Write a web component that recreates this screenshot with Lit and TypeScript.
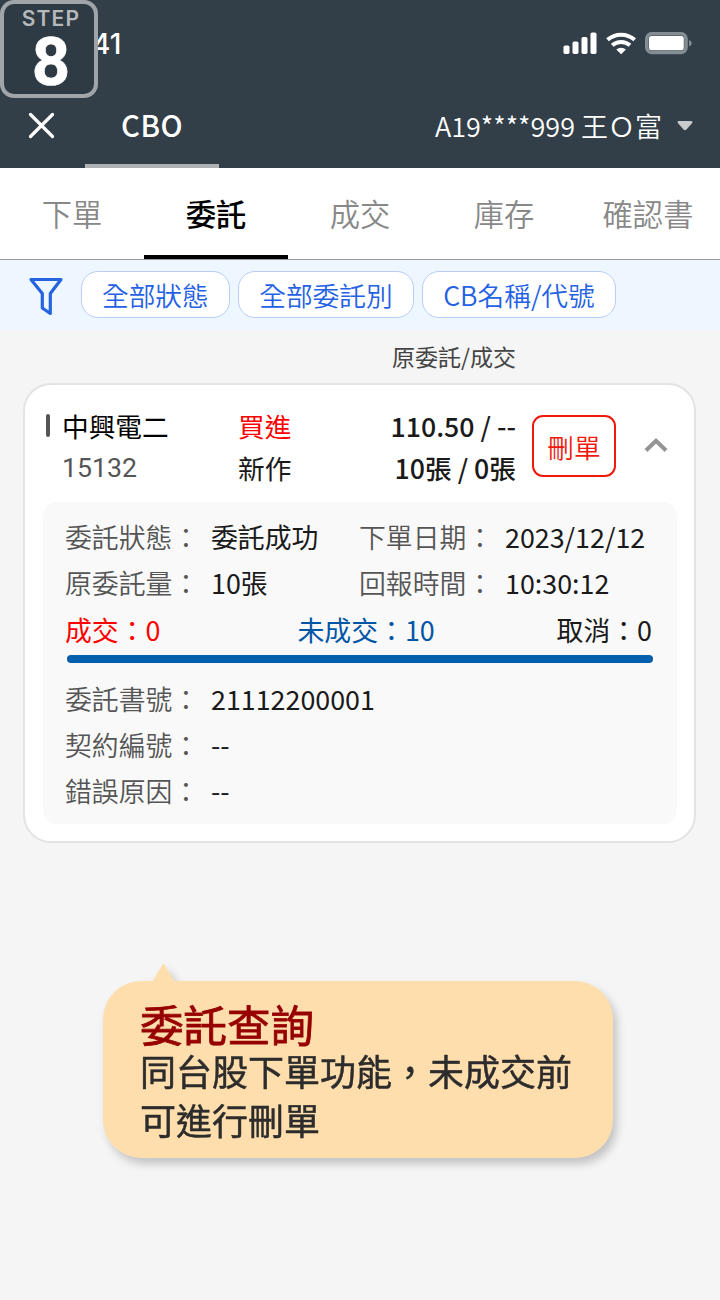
import { LitElement, html, css } from "lit";
import { customElement, state } from "lit/decorators.js";
import { classMap } from "lit/directives/class-map.js";

@customElement("status-bar")
class StatusBar extends LitElement {
  static styles = css`
    :host { display: flex; height: 84px; box-sizing: border-box; align-items: center; padding: 4px 27px 0 92px; justify-content: space-between; color: #fff; }
    .time { font: 500 28px/30px Inter, sans-serif; }
    svg { display: block; }
  `;
  render() {
    return html`
      <span class="time">41</span>
      <svg width="130" height="24" viewBox="0 0 130 24" fill="#fff">
        <rect x="0.5" y="13.500" width="6" height="8.5" rx="1.7" />
        <rect x="9.5" y="9.500" width="6" height="12.5" rx="1.7" />
        <rect x="18.5" y="5" width="6" height="17" rx="1.7" />
        <rect x="27.5" y="0.5" width="6" height="21.5" rx="1.7" />
        <g fill="none" stroke="#fff" stroke-width="4">
          <path d="M44.500 7.800a20.500 20.500 0 0 1 27.200 0" />
          <path d="M49.200 13.300a13.500 13.500 0 0 1 17.800 0" />
        </g>
        <path d="M53.300 17.500a7.200 7.200 0 0 1 9.600 0L58.100 22.300z" />
        <rect x="83.800" y="1.700" width="39.200" height="18.800" rx="5" fill="none" stroke="#858d94" stroke-width="3.600" />
        <rect x="86" y="3.900" width="34.800" height="14.400" rx="2.500" />
        <path d="M126 8v6.500q2.700-1 2.700-3.200t-2.700-3.300z" fill="#858d94" />
      </svg>
    `;
  }
}

@customElement("step-badge")
class StepBadge extends LitElement {
  static styles = css`
    :host { position: absolute; left: 0; top: 0; width: 98px; height: 98px; box-sizing: border-box; border: 4px solid #a0a5aa; border-radius: 14px; background: #2e3a44; display: flex; flex-direction: column; align-items: center; padding: 4px 0 0 4px; }
    .label { font: 600 21px/22px Inter, sans-serif; letter-spacing: 1.200px; color: #b5b9bc; }
    .num { font: 700 67px/67px Roboto, sans-serif; color: #fff; -webkit-text-stroke: 0.600px #fff; margin: -1px 0 0 0; }
  `;
  render() {
    return html`<span class="label">STEP</span><span class="num">8</span>`;
  }
}

@customElement("order-card")
class OrderCard extends LitElement {
  static styles = css`
    :host { display: block; margin: 0 24px 0 23px; height: 460px; box-sizing: border-box; border: 2px solid #e3e3e3; border-radius: 28px; background: #fff; }
    .head { display: grid; grid-template-columns: 193px 121px 157px 84px 1fr; padding: 20px 0 0 20px; height: 117px; box-sizing: border-box; }
    .col { display: flex; flex-direction: column; line-height: 42px; color: #1a1a1a; }
    .name { display: flex; align-items: center; gap: 12px; color: #000; }
    .mark { width: 4px; height: 23px; border-radius: 2px; background: #555; margin: -2px 0 0 1px; }
    .code { padding-left: 17px; font-family: Roboto, sans-serif; color: #555; }
    .buy { color: #f00; }
    .right { align-items: flex-end; font-weight: 500; }
    .cancel { margin: 10px 0 0 16px; width: 84px; height: 62px; box-sizing: border-box; border: 2px solid #f01a0c; border-radius: 11px; color: #f01a0c; background: #fff; font: inherit; font-weight: 350; padding: 0; line-height: 59px; }
    .fold { margin: 30px 0 0 44px; display: block; }
    .panel { margin: 0 17px 0 18px; height: 322px; box-sizing: border-box; border-radius: 14px; background: #f9f9f9; padding: 12px 25px 0 22px; color: #1a1a1a; }
    .row { display: grid; grid-template-columns: 146px 148px 146px 1fr; height: 46px; line-height: 46px; white-space: nowrap; font-size: 26.850px; }
    .label { color: #555; font-weight: 350; }
    .sum { display: grid; grid-template-columns: 232.500px 1fr auto; line-height: 48px; height: 49px; font-size: 26.850px; }
    .open { color: #0055a5; }
    .void { text-align: right; }
    .track { height: 8px; border-radius: 4px; background: #005fac; margin: 0 -1px 13px 2px; }
  `;
  render() {
    return html`
      <div class="head">
        <div class="col">
          <span class="name"><i class="mark"></i>中興電二</span>
          <span class="code">15132</span>
        </div>
        <div class="col"><span class="buy">買進</span><span>新作</span></div>
        <div class="col right"><span>110.50 / --</span><span>10張 / 0張</span></div>
        <button class="cancel">刪單</button>
        <svg class="fold" width="24" height="20" viewBox="0 0 24 20" fill="none" stroke="#949494" stroke-width="4"><path d="M2 15.500L12 5.700L22 15.500" /></svg>
      </div>
      <div class="panel">
        <div class="row"><span class="label">委託狀態：</span><span>委託成功</span><span class="label">下單日期：</span><span>2023/12/12</span></div>
        <div class="row"><span class="label">原委託量：</span><span>10張</span><span class="label">回報時間：</span><span>10:30:12</span></div>
        <div class="sum"><span class="buy">成交：0</span><span class="open">未成交：10</span><span class="void">取消：0</span></div>
        <div class="track"></div>
        <div class="row"><span class="label">委託書號：</span><span>21112200001</span></div>
        <div class="row"><span class="label">契約編號：</span><span>--</span></div>
        <div class="row"><span class="label">錯誤原因：</span><span>--</span></div>
      </div>
    `;
  }
}

@customElement("tip-bubble")
class TipBubble extends LitElement {
  static styles = css`
    :host { display: block; position: relative; margin: 138px 0 0 103px; width: 510px; height: 177px; box-sizing: border-box; border-radius: 38px; background: #ffdeae; padding: 20px 0 0 37px; filter: drop-shadow(4px 6px 4px rgba(0, 0, 0, 0.2)); }
    .tail { position: absolute; left: 49px; top: -18px; width: 23px; height: 19px; background: #ffdeae; clip-path: polygon(50% 0, 100% 100%, 0 100%); }
    .title { font-size: 43.500px; line-height: 45px; color: #960000; font-weight: 400; -webkit-text-stroke: 0.800px #960000; }
    .body { font-size: 36px; line-height: 49px; color: #2c2c2c; font-weight: 400; -webkit-text-stroke: 0.500px #2c2c2c; white-space: nowrap; }
  `;
  render() {
    return html`
      <div class="tail"></div>
      <div class="title">委託查詢</div>
      <div class="body">同台股下單功能，未成交前<br />可進行刪單</div>
    `;
  }
}

@customElement("app-root")
class AppRoot extends LitElement {
  static styles = css`
    :host { display: block; position: relative; width: 720px; height: 1300px; overflow: hidden; background: #f5f5f5; font: 400 26.700px/42px "Noto Sans CJK TC", sans-serif; }
    .header { background: #323e48; height: 168px; }
    .nav { display: flex; height: 84px; color: #fff; }
    .close { margin: 28px 0 0 28px; }
    .app { margin-left: 30px; width: 134px; box-sizing: border-box; border-bottom: 4px solid #afb1b4; text-align: center; font-weight: 500; font-size: 29.300px; line-height: 81px; letter-spacing: 0.500px; }
    .user { margin-left: auto; display: flex; gap: 15px; align-items: center; padding: 0 27px 0 0; font-weight: 350; font-size: 27px; white-space: pre; }
    .tabs { display: grid; grid-template-columns: repeat(5, 144px); height: 92px; box-sizing: border-box; border-bottom: 1px solid #999; background: #fff; }
    .tab { text-align: center; font-size: 30.300px; line-height: 90px; color: #888; font-weight: 350; box-sizing: border-box; height: 91px; }
    .tab.on { color: #000; font-weight: 500; border-bottom: 4px solid #000; }
    .filters { display: flex; height: 70px; box-sizing: border-box; padding: 11px 0 0 28px; background: #eef7ff; color: #2461e4; }
    .funnel { margin: 5px 16.500px 0 0; display: block; }
    .chip { box-sizing: border-box; height: 47px; border: 1.500px solid #b9cdf7; border-radius: 17px; background: #fff; padding: 0 20.500px; line-height: 46px; margin-right: 7.500px; white-space: nowrap; font-weight: 350; }
    .caption { width: 516px; text-align: right; font-size: 23px; line-height: 52px; height: 53px; color: #444; }
  `;
  @state() tab = 1;
  tabs = ["下單", "委託", "成交", "庫存", "確認書"];
  chips = ["全部狀態", "全部委託別", "CB名稱/代號"];
  render() {
    return html`
      <div class="header">
        <status-bar></status-bar>
        <div class="nav">
          <svg class="close" width="27" height="27" viewBox="0 0 27 27" stroke="#fff" stroke-width="3.200" stroke-linecap="round"><path d="M2.500 2.500l22 22M24.500 2.500l-22 22" /></svg>
          <div class="app">CBO</div>
          <div class="user"><span>A19****999 王Ｏ富</span><svg width="16" height="12" viewBox="0 0 16 12"><path d="M2 1h12q2 0 1.200 2L9.500 9.600q-1.500 1.500-3 0L.8 3Q0 1 2 1z" fill="#c9cbcd" /></svg></div>
        </div>
      </div>
      <div class="tabs">
        ${this.tabs.map((t, i) => html`<div class=${classMap({ tab: true, on: i === this.tab })} @click=${() => (this.tab = i)}>${t}</div>`)}
      </div>
      <div class="filters">
        <svg class="funnel" width="36" height="42" viewBox="0 0 36 42" fill="none" stroke="#2563e0" stroke-width="3.200" stroke-linejoin="round"><path d="M3 3.500H33L22.300 17.500V37.500L14.300 32V17.500Z" /></svg>
        ${this.chips.map((c) => html`<span class="chip">${c}</span>`)}
      </div>
      <div class="caption">原委託/成交</div>
      <order-card></order-card>
      <tip-bubble></tip-bubble>
      <step-badge></step-badge>
    `;
  }
}
